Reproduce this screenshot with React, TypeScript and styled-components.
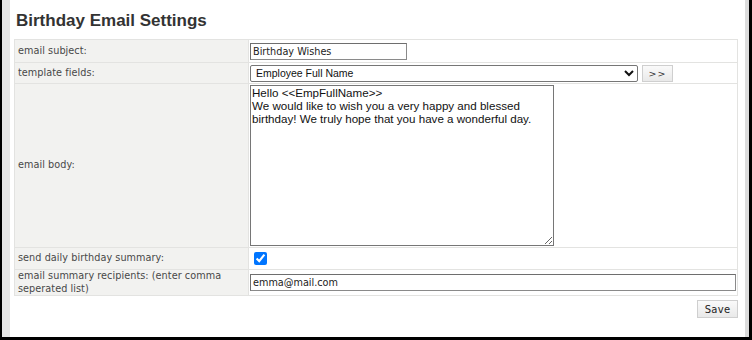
import React, { useState } from 'react';
import styled, { createGlobalStyle } from 'styled-components';

const GlobalStyle = createGlobalStyle`
  html, body {
    margin: 0;
    padding: 0;
    background: #000;
  }
`;

const Frame = styled.div`
  width: 752px;
  height: 340px;
  box-sizing: border-box;
  border-left: 2px solid #000;
  border-right: 3px solid #000;
  border-bottom: 3px solid #000;
  background: #000;
`;

const Page = styled.div`
  height: 100%;
  box-sizing: border-box;
  background: #fff;
  border-left: 8px solid #e6e6e6;
  border-right: 4px solid #dcdcdc;
  padding: 10px 7px 0 4px;
`;

const Title = styled.h1`
  margin: 0 0 9px 2px;
  height: 20px;
  font-family: "Liberation Sans", Arial, sans-serif;
  font-size: 17px;
  line-height: 21px;
  font-weight: bold;
  color: #333;
`;

const Table = styled.table`
  width: 724px;
  border-collapse: collapse;
  table-layout: fixed;
`;

const Row = styled.tr<{ h: number }>`
  height: ${({ h }) => h}px;
`;

const Label = styled.td`
  width: 234px;
  box-sizing: border-box;
  background: #f2f2f0;
  border: 1px solid #e3e3e1;
  padding: 0 3px;
  font-family: "DejaVu Sans", Verdana, sans-serif;
  font-size: 9.7px;
  line-height: 12.5px;
  letter-spacing: 0.05px;
  color: #484848;
  vertical-align: middle;
`;

const Value = styled.td`
  background: #fff;
  border: 1px solid #e3e3e1;
  padding: 0 1px;
  vertical-align: middle;
`;

const TextInput = styled.input<{ w: number }>`
  display: block;
  box-sizing: border-box;
  width: ${({ w }) => w}px;
  height: 17px;
  margin: 0;
  padding: 0 2px;
  border: 1px solid #8a8a8a;
  border-top-color: #6e6e6e;
  border-left-color: #6e6e6e;
  border-radius: 0;
  font-family: "DejaVu Sans", Verdana, sans-serif;
  font-size: 9.7px;
  color: #222;
  outline: none;
`;

const FieldLine = styled.div`
  display: flex;
  align-items: center;
  gap: 4px;
`;

const Select = styled.select`
  box-sizing: border-box;
  width: 388px;
  height: 17px;
  margin: 0;
  padding: 0 0 0 1px;
  border: 1px solid #767676;
  border-radius: 2px;
  background: #fff;
  font-family: "Liberation Sans", Arial, sans-serif;
  font-size: 10.5px;
  color: #111;
`;

const SmallButton = styled.button<{ w: number }>`
  box-sizing: border-box;
  width: ${({ w }) => w}px;
  height: 17px;
  margin: 0;
  padding: 0;
  border: 1px solid #cfcfcf;
  border-radius: 0;
  background: linear-gradient(#fafafa, #e9e9e9);
  font-family: "DejaVu Sans", Verdana, sans-serif;
  font-size: 9.5px;
  color: #333;
  letter-spacing: 1px;
`;

const BodyArea = styled.textarea`
  display: block;
  box-sizing: border-box;
  width: 304px;
  height: 161px;
  margin: 0;
  padding: 0 1px;
  border: 1px solid #767676;
  border-radius: 0;
  font-family: "Liberation Sans", Arial, sans-serif;
  font-size: 11.6px;
  line-height: 13px;
  color: #111;
  resize: both;
  outline: none;
`;

const Check = styled.input`
  display: block;
  width: 13px;
  height: 13px;
  margin: 0 0 0 4px;
  accent-color: #0075ff;
`;

const Footer = styled.div`
  width: 724px;
  display: flex;
  justify-content: flex-end;
  padding-top: 4px;
`;

const SaveButton = styled(SmallButton)`
  height: 18px;
  font-size: 10px;
  letter-spacing: 0.3px;
  color: #222;
`;

const App = () => {
  const [subject, setSubject] = useState('Birthday Wishes');
  const [field, setField] = useState('EmpFullName');
  const [body, setBody] = useState(
    'Hello <<EmpFullName>>\nWe would like to wish you a very happy and blessed birthday! We truly hope that you have a wonderful day.'
  );
  const [summary, setSummary] = useState(true);
  const [recipients, setRecipients] = useState('emma@mail.com');

  return (
    <Frame>
      <GlobalStyle />
      <Page>
        <Title>Birthday Email Settings</Title>
        <Table>
          <tbody>
            <Row h={23}>
              <Label>email subject:</Label>
              <Value>
                <TextInput w={157} value={subject} onChange={(e) => setSubject(e.target.value)} />
              </Value>
            </Row>
            <Row h={21}>
              <Label>template fields:</Label>
              <Value>
                <FieldLine>
                  <Select value={field} onChange={(e) => setField(e.target.value)}>
                    <option value="EmpFullName">Employee Full Name</option>
                    <option value="EmpFirstName">Employee First Name</option>
                  </Select>
                  <SmallButton w={31}>&gt;&gt;</SmallButton>
                </FieldLine>
              </Value>
            </Row>
            <Row h={164}>
              <Label>email body:</Label>
              <Value>
                <BodyArea spellCheck={false} value={body} onChange={(e) => setBody(e.target.value)} />
              </Value>
            </Row>
            <Row h={22}>
              <Label>send daily birthday summary:</Label>
              <Value>
                <Check type="checkbox" checked={summary} onChange={(e) => setSummary(e.target.checked)} />
              </Value>
            </Row>
            <Row h={26}>
              <Label>email summary recipients: (enter comma seperated list)</Label>
              <Value>
                <TextInput w={486} value={recipients} onChange={(e) => setRecipients(e.target.value)} />
              </Value>
            </Row>
          </tbody>
        </Table>
        <Footer>
          <SaveButton w={41}>Save</SaveButton>
        </Footer>
      </Page>
    </Frame>
  );
};

export default App;
